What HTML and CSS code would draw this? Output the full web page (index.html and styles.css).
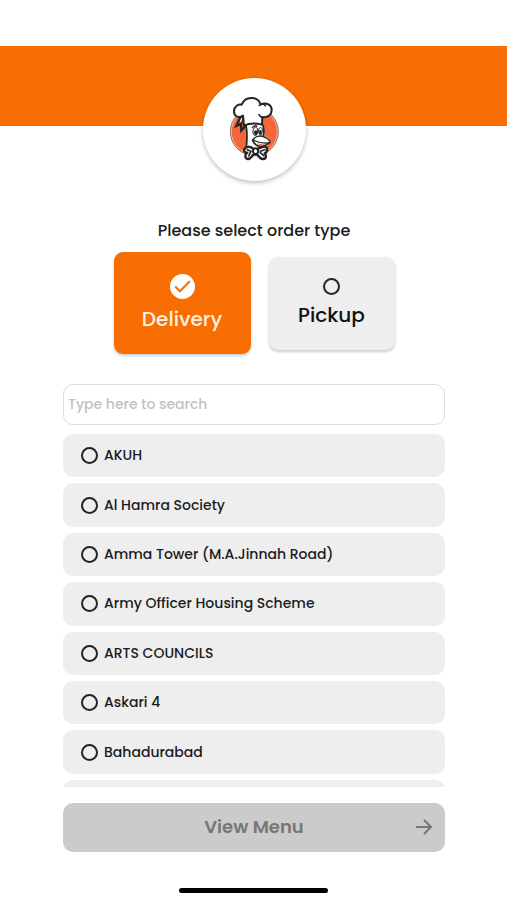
FILE: index.html
```html
<!DOCTYPE html>
<html lang="en">
<head>
<meta charset="utf-8">
<meta name="viewport" content="width=device-width, initial-scale=1">
<title>Select order type</title>
<link rel="stylesheet" href="styles.css">
</head>
<body>
<header class="banner">
  <div class="logo">
    <svg class="logo-art" viewBox="0 0 192 228" aria-hidden="true">
      <circle cx="97" cy="125" r="72" fill="#f5663a" stroke="#8a736c" stroke-width="3"/>
      <circle cx="97" cy="125" r="69" fill="none" stroke="#fbd5c8" stroke-width="2"/>
      <path d="M70 102 C84 96 108 96 124 102 L128 140 C142 144 147 152 144 158 C134 170 116 174 104 168 L108 184 L74 184 C76 160 78 134 70 102 Z" fill="#fff"/>
      <path d="M46 80 L64 80 L68 106 L58 100 Z" fill="#fff"/>
      <path d="M55 82 L43 108 L57 102 L58 122 L72 106" fill="none" stroke="#242527" stroke-width="7" stroke-linejoin="miter"/>
      <path d="M64 84 L58 100 L66 98" fill="none" stroke="#242527" stroke-width="4"/>
      <path d="M66 106 C64 96 65 88 63 78 C48 86 35 77 36 63 C37 48 49 42 59 44 C65 29 78 23 91 24 C106 25 113 34 116 43 C132 36 148 43 149 58 C150 74 138 84 121 81 L120 104 C100 98 82 100 66 106 Z" fill="#fff" stroke="#242527" stroke-width="6" stroke-linejoin="round"/>
      <path d="M112 46 C118 41 128 42 130 47 M50 82 C55 82 60 80 63 76 M121 83 C116 81 113 78 111 74" fill="none" stroke="#242527" stroke-width="5" stroke-linecap="round"/>
      <path d="M72 108 C78 130 74 152 73 174" fill="none" stroke="#242527" stroke-width="5" stroke-linecap="round"/>
      <path d="M122 103 C126 117 127 128 124 138" fill="none" stroke="#242527" stroke-width="5"/>
      <path d="M93 121 C96 108 106 110 107 120 L105 134 C101 139 94 136 93 129 Z M110 119 C113 109 121 112 121 120 L119 133 C115 137 111 133 110 128 Z" fill="#fff" stroke="#242527" stroke-width="3"/>
      <ellipse cx="101" cy="128" rx="5" ry="7" fill="#242527"/>
      <ellipse cx="115" cy="127" rx="4" ry="7" fill="#242527"/>
      <path d="M90 114 C94 108 101 106 106 109" fill="none" stroke="#242527" stroke-width="4"/>
      <path d="M92 149 C102 137 119 134 132 144 C140 148 146 153 143 158 C126 161 108 158 92 149 Z" fill="#fff" stroke="#242527" stroke-width="4" stroke-linejoin="round"/>
      <path d="M92 151 C98 167 118 176 134 163 L142 159" fill="none" stroke="#242527" stroke-width="5" stroke-linecap="round"/>
      <path d="M104 159 C112 163 121 164 129 162 C122 168 112 167 104 159 Z" fill="#f5663a"/>
      <path d="M94 177 C87 168 70 168 67 178 C65 185 70 189 76 188 C66 196 70 207 78 207 C86 207 88 200 94 194 L106 193 C111 202 117 208 125 207 C134 205 133 196 128 190 C138 186 138 171 128 170 C119 169 112 176 106 178 Z" fill="#fff" stroke="#242527" stroke-width="7" stroke-linejoin="round"/>
      <path d="M94 178 C101 171 110 177 108 187 C104 195 94 193 93 185 Z" fill="#fff" stroke="#242527" stroke-width="6"/>
      <path d="M76 179 L87 184 L80 198 M115 184 L128 179 M115 188 L125 197" fill="none" stroke="#242527" stroke-width="5" stroke-linecap="round"/>
    </svg>
  </div>
</header>
<form class="order">
  <fieldset class="types">
    <legend class="title">Please select order type</legend>
    <div class="cards">
      <label class="card card-selected">
        <input class="card-input" type="radio" name="type" checked>
        <svg class="check" viewBox="0 0 24 24" aria-hidden="true"><circle cx="12" cy="12" r="12" fill="#fff"/><path d="M5 12 L9.500 16.500 L19 7" fill="none" stroke="#f86e02" stroke-width="2"/></svg>
        <span>Delivery</span>
      </label>
      <label class="card">
        <input class="ring" type="radio" name="type">
        <span>Pickup</span>
      </label>
    </div>
  </fieldset>
  <input class="search" type="search" placeholder="Type here to search" aria-label="Search areas">
  <div class="areas" role="radiogroup" aria-label="Areas">
    <label class="area"><input class="ring" type="radio" name="area"><span>AKUH</span></label>
    <label class="area"><input class="ring" type="radio" name="area"><span>Al Hamra Society</span></label>
    <label class="area"><input class="ring" type="radio" name="area"><span>Amma Tower (M.A.Jinnah Road)</span></label>
    <label class="area"><input class="ring" type="radio" name="area"><span>Army Officer Housing Scheme</span></label>
    <label class="area"><input class="ring" type="radio" name="area"><span>ARTS COUNCILS</span></label>
    <label class="area"><input class="ring" type="radio" name="area"><span>Askari 4</span></label>
    <label class="area"><input class="ring" type="radio" name="area"><span>Bahadurabad</span></label>
    <div class="area"></div>
  </div>
  <button class="submit" type="submit" disabled>
    <span>View Menu</span>
    <svg class="arrow" viewBox="0 0 16 16" aria-hidden="true"><path d="M0 8 H15 M8 1 L15 8 L8 15" fill="none" stroke="currentColor" stroke-width="2"/></svg>
  </button>
</form>
<div class="home-bar"></div>
</body>
</html>
```
FILE: styles.css
```css
* {
  box-sizing: border-box;
}

body {
  display: flex;
  flex-direction: column;
  height: 100vh;
  margin: 0;
  padding: 46px 0 7px;
  overflow: hidden;
  background: #fff;
  color: #1c1c1e;
  font-family: Poppins, Inter, "Open Sans", sans-serif;
  font-size: 14px;
  font-weight: 500;
}

.banner {
  display: flex;
  flex: none;
  justify-content: center;
  height: 80px;
  padding: 32px 0 0 1px;
  background: #f86e02;
}

.logo {
  display: flex;
  flex: none;
  justify-content: center;
  width: 103px;
  height: 103px;
  padding-top: 12px;
  border-radius: 50%;
  background: #fff;
  box-shadow: 0 2px 4px rgba(0, 0, 0, 0.25);
}

.logo-art {
  width: 64px;
  height: 76px;
}

.order {
  display: flex;
  flex: 1;
  flex-direction: column;
  min-height: 0;
  padding: 95px 62px 0 63px;
}

.types {
  min-width: 0;
  margin: 0;
  padding: 0;
  border: 0;
}

.title {
  width: 100%;
  padding: 0;
  font-size: 16px;
  line-height: 20px;
  text-align: center;
}

.cards {
  display: flex;
  align-items: center;
  justify-content: center;
  gap: 18px;
  margin-top: 11px;
}

.card {
  display: flex;
  flex-direction: column;
  align-items: center;
  justify-content: center;
  gap: 6px;
  width: 126px;
  height: 93px;
  border-radius: 9px;
  background: #eee;
  box-shadow: 0 2px 3px rgba(0, 0, 0, 0.2);
  color: #111;
  font-size: 20px;
  line-height: 28px;
}

.card-selected {
  width: 137px;
  height: 102px;
  background: #f86e02;
  color: #fff1e0;
}

.card-input {
  position: absolute;
  opacity: 0;
}

.check {
  width: 25px;
  height: 25px;
}

.ring {
  flex: none;
  width: 17px;
  height: 17px;
  margin: 0;
  border: 2px solid #242426;
  border-radius: 50%;
  appearance: none;
}

.search {
  flex: none;
  width: 100%;
  height: 41px;
  margin: 30px 0 9px;
  padding: 0 4px;
  border: 1px solid #dcdcdc;
  border-radius: 10px;
  background: #fff;
  font: inherit;
  appearance: none;
}

.search::placeholder {
  color: #c2c2c2;
}

.areas {
  display: grid;
  flex: 1;
  grid-auto-rows: 14%;
  min-height: 0;
  overflow: hidden;
}

.area {
  display: flex;
  align-items: center;
  gap: 6px;
  margin-bottom: 6px;
  padding: 0 18px;
  border-radius: 10px;
  background: #eee;
}

.submit {
  display: grid;
  flex: none;
  grid-template-columns: 16px 1fr 16px;
  align-items: center;
  height: 49px;
  margin-top: 16px;
  padding: 0 13px 2px;
  border: 0;
  border-radius: 10px;
  background: #cbcbcb;
  color: #777;
  font: inherit;
  font-size: 18px;
  font-weight: 600;
}

.submit span {
  grid-column: 2;
}

.arrow {
  width: 16px;
  height: 16px;
}

.home-bar {
  flex: none;
  align-self: center;
  width: 149px;
  height: 5px;
  margin-top: 36px;
  border-radius: 3px;
  background: #000;
}
```
